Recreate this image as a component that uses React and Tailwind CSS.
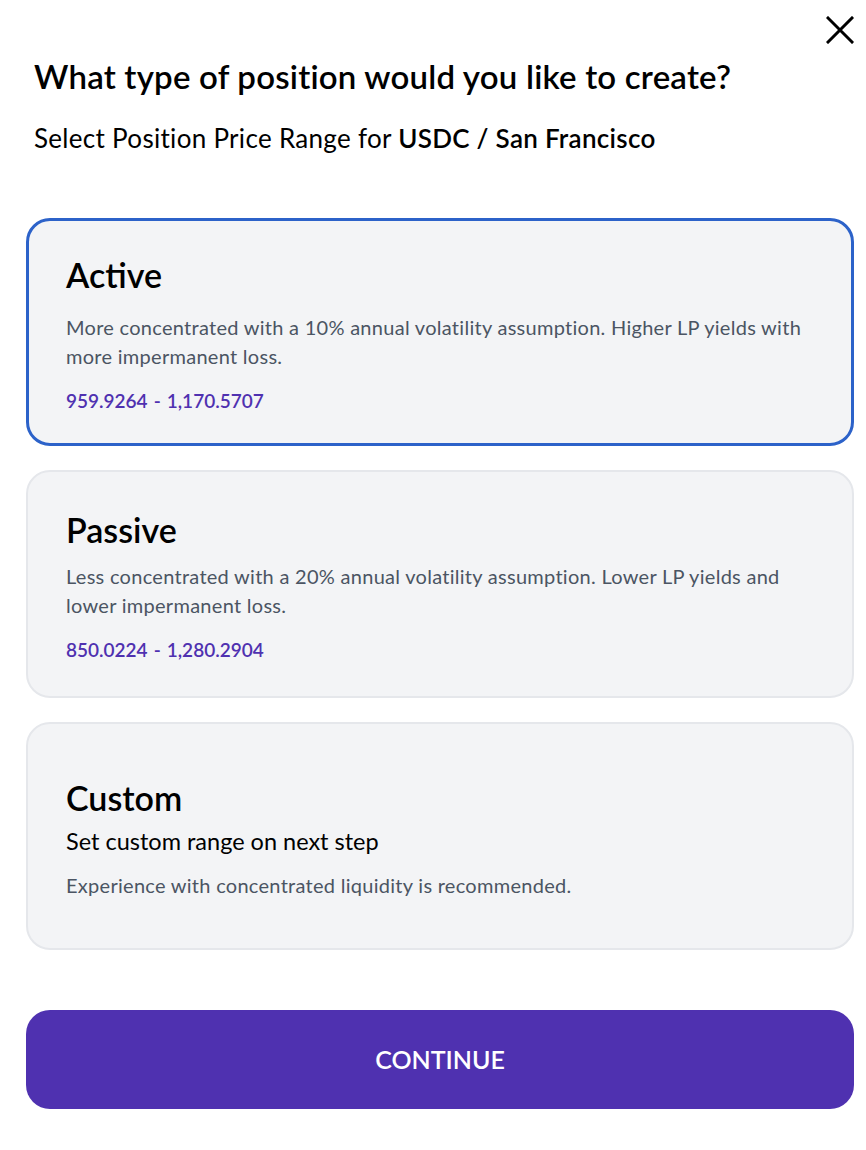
const font = { fontFamily: '"Lato", "Noto Sans", sans-serif' };

function OptionCard({ title, selected, children, titleGap }) {
  return (
    <div
      className={`h-[228px] rounded-[24px] bg-[#f3f4f6] flex flex-col justify-center pt-[6px] ${
        selected
          ? "border-[3px] border-[#2c62c9] px-[37px]"
          : "border-2 border-[#e5e7eb] px-[38px]"
      }`}
    >
      <h2 className={`text-[34px] leading-[40px] font-semibold text-black ${titleGap}`}>
        {title}
      </h2>
      {children}
    </div>
  );
}

function Range({ from, to }) {
  return (
    <p className="mt-[15px] text-[19px] leading-[29px] font-semibold text-[#4f31b0]">
      {from}
      <span className="mx-[6px]">-</span>
      {to}
    </p>
  );
}

export default function App() {
  return (
    <div className="min-h-screen bg-white relative" style={font}>
      <button className="absolute right-[12px] top-[16px] text-black">
        <svg width="28" height="28" viewBox="0 0 28 28" fill="none" stroke="currentColor" strokeWidth="3" strokeLinecap="square">
          <path d="M2 2 L26 26 M26 2 L2 26" />
        </svg>
      </button>

      <div className="pl-[26px] pr-[12px] pt-[56px]">
        <h1 className="pl-[8px] text-[33px] leading-[40px] font-semibold text-black tracking-[0.2px]">
          What type of position would you like to create?
        </h1>
        <p className="pl-[8px] mt-[26px] text-[26px] leading-[32px] text-black tracking-[0.3px]">
          Select Position Price Range for{" "}
          <span className="font-semibold">USDC / San Francisco</span>
        </p>

        <div className="mt-[64px] flex flex-col gap-[24px]">
          <OptionCard title="Active" selected titleGap="mb-[18px]">
            <p className="text-[20px] leading-[29px] text-[#4b5563] tracking-[0.28px]">
              More concentrated with a 10% annual volatility assumption. Higher LP yields with
              more impermanent loss.
            </p>
            <Range from="959.9264" to="1,170.5707" />
          </OptionCard>

          <OptionCard title="Passive" titleGap="mb-[12px]">
            <p className="text-[20px] leading-[29px] text-[#4b5563] tracking-[0.28px]">
              Less concentrated with a 20% annual volatility assumption. Lower LP yields and
              lower impermanent loss.
            </p>
            <Range from="850.0224" to="1,280.2904" />
          </OptionCard>

          <OptionCard title="Custom" titleGap="mb-[8px]">
            <p className="text-[23.5px] leading-[30px] text-black">Set custom range on next step</p>
            <p className="mt-[15px] text-[20px] leading-[29px] text-[#4b5563] tracking-[0.28px]">
              Experience with concentrated liquidity is recommended.
            </p>
          </OptionCard>
        </div>

        <button className="mt-[60px] w-full h-[99px] rounded-[24px] bg-[#4f31b0] text-white text-[25px] font-semibold">
          CONTINUE
        </button>
      </div>
    </div>
  );
}
